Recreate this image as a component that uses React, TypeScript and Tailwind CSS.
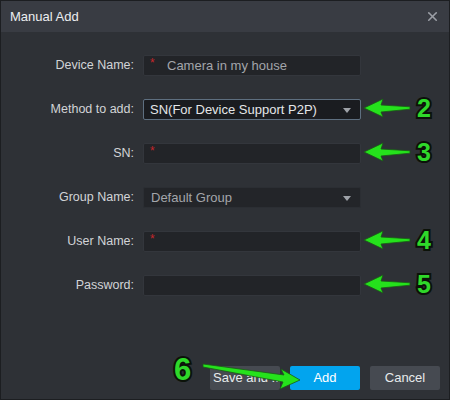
import { X } from 'lucide-react'

const font = { fontFamily: '"Liberation Sans", Arial, sans-serif' }

function Label({ text }: { text: string }) {
  return <div className="w-[134px] shrink-0 pr-[1px] text-right text-[12.5px] text-[#d2d4d7]">{text}</div>
}

function Req() {
  return <span className="absolute left-[6px] top-[1px] text-[12px] leading-none text-[#c4262b]">*</span>
}

function Field({ children, className = '' }: { children?: React.ReactNode; className?: string }) {
  return (
    <div className={`relative ml-[8px] flex h-[21px] w-[218px] items-center rounded-[2px] ${className}`}>
      {children}
    </div>
  )
}

function Caret({ color = '#9ea2a8' }: { color?: string }) {
  return (
    <svg className="absolute right-[9px] top-[8px]" width="8" height="5" viewBox="0 0 8 5">
      <path d="M0 0 H8 L4 5 Z" fill={color} />
    </svg>
  )
}

function Row({ label, children }: { label: string; children: React.ReactNode }) {
  return (
    <div className="flex h-[21px] items-center">
      <Label text={label} />
      {children}
    </div>
  )
}

// green annotation arrow pointing left, tip at (x, y)
function arrowPath(x: number, y: number, len = 46) {
  const hx = x + 19
  return `M${x} ${y} L${hx} ${y - 9} L${hx - 2} ${y - 3} L${x + len} ${y - 1.2} L${x + len} ${y + 1.2} L${hx - 2} ${y + 4} L${hx} ${y + 9} Z`
}

function Num({ n, x, y, size = 25 }: { n: string; x: number; y: number; size?: number }) {
  return (
    <span
      className="absolute font-bold leading-none text-[#2fd82a]"
      style={{
        left: x,
        top: y,
        fontSize: size,
        WebkitTextStroke: '4px #0b1209',
        paintOrder: 'stroke fill',
        fontFamily: '"Liberation Sans", Arial, sans-serif',
      }}
    >
      {n}
    </span>
  )
}

export default function App() {
  return (
    <div className="relative h-[400px] w-[450px] overflow-hidden border border-[#1c1e21] bg-[#2e3136]" style={font}>
      <div className="flex h-[31px] items-center justify-between bg-[#393c43] pl-[9px] pr-[9px]">
        <span className="text-[13px] text-[#eceef0]">Manual Add</span>
        <X className="h-[15px] w-[15px] text-[#9a9ea5]" strokeWidth={2.6} />
      </div>

      <div className="flex flex-col gap-[23px] pt-[23px]">
        <Row label="Device Name:">
          <Field className="border border-[#33363c] bg-[#222428]">
            <Req />
            <span className="pl-[23px] text-[13px] text-[#a3a6ab]">Camera in my house</span>
          </Field>
        </Row>
        <Row label="Method to add:">
          <Field className="border border-[#5e6f80] bg-[#1a1c20]">
            <span className="pl-[6px] text-[13px] text-[#e4e6e8]">SN(For Device Support P2P)</span>
            <Caret />
          </Field>
        </Row>
        <Row label="SN:">
          <Field className="border border-[#33363c] bg-[#222428]">
            <Req />
          </Field>
        </Row>
        <Row label="Group Name:">
          <Field className="border border-[#2b2e33] bg-[#232529]">
            <span className="pl-[7px] text-[13px] text-[#a3a6ab]">Default Group</span>
            <Caret />
          </Field>
        </Row>
        <Row label="User Name:">
          <Field className="border border-[#33363c] bg-[#222428]">
            <Req />
          </Field>
        </Row>
        <Row label="Password:">
          <Field className="border border-[#33363c] bg-[#222428]" />
        </Row>
      </div>

      <div className="mt-[70px] flex justify-end gap-[10px] pr-[9px]">
        <button className="h-[24px] w-[70px] overflow-hidden whitespace-nowrap rounded-[2px] bg-[#464a51] pl-[3px] text-left text-[13px] text-[#e8eaec]">
          Save and ...
        </button>
        <button className="h-[24px] w-[70px] rounded-[2px] bg-[#02a4ee] text-[13px] text-white">Add</button>
        <button className="h-[24px] w-[70px] rounded-[2px] bg-[#464a51] text-[13px] text-[#e8eaec]">Cancel</button>
      </div>

      <svg className="pointer-events-none absolute left-[-1px] top-[-1px]" width="450" height="400" viewBox="0 0 450 400">
        <g fill="#25e21c" stroke="#1b5a16" strokeWidth="0.8" strokeLinejoin="round">
          <path d={arrowPath(364, 108)} />
          <path d={arrowPath(364, 152)} />
          <path d={arrowPath(364, 240)} />
          <path d={arrowPath(364, 284)} />
          <path d="M300 380 L280 389 L283 382 L203 367 L203 364 L284 375 L281 369 Z" />
        </g>
      </svg>
      <Num n="2" x={416} y={95} />
      <Num n="3" x={416} y={139} />
      <Num n="4" x={416} y={227} />
      <Num n="5" x={416} y={271} />
      <Num n="6" x={173} y={353} size={31} />
    </div>
  )
}
